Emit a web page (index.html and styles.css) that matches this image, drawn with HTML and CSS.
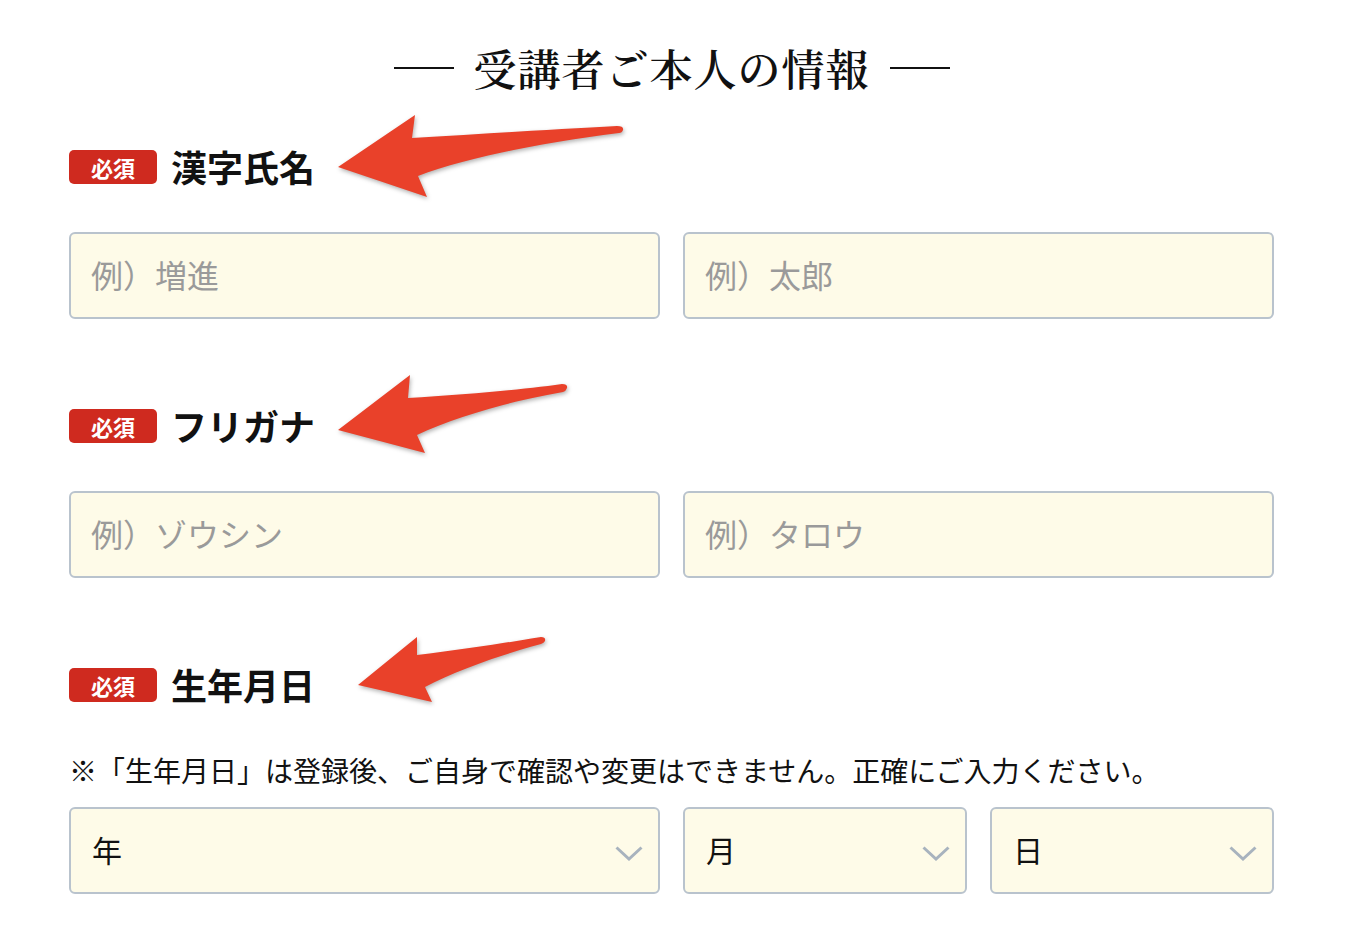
FILE: index.html
```html
<!DOCTYPE html>
<html lang="ja">
<head>
    <meta charset="UTF-8">
    <meta name="viewport" content="width=device-width, initial-scale=1.0">
    <title>受講者ご本人の情報</title>
    <link rel="stylesheet" href="styles.css">
</head>
<body>
    <div class="page">
        <h2 class="section-title">受講者ご本人の情報</h2>

        <div class="field first">
            <div class="field-head">
                <span class="badge">必須</span>
                <span class="label">漢字氏名</span>
            </div>
            <div class="field-body">
                <input type="text" class="span-2" placeholder="例）増進">
                <input type="text" class="span-2" placeholder="例）太郎">
            </div>
        </div>

        <div class="field">
            <div class="field-head">
                <span class="badge">必須</span>
                <span class="label">フリガナ</span>
            </div>
            <div class="field-body">
                <input type="text" class="span-2" placeholder="例）ゾウシン">
                <input type="text" class="span-2" placeholder="例）タロウ">
            </div>
        </div>

        <div class="field">
            <div class="field-head">
                <span class="badge">必須</span>
                <span class="label">生年月日</span>
            </div>
            <p class="note">※「生年月日」は登録後、ご自身で確認や変更はできません。正確にご入力ください。</p>
            <div class="field-body dates">
                <div class="select-wrap span-2">
                    <select><option>年</option></select>
                    <svg class="chevron" viewBox="0 0 28 15"><path d="M1.5 1.5 L14 13 L26.5 1.5"/></svg>
                </div>
                <div class="select-wrap">
                    <select><option>月</option></select>
                    <svg class="chevron" viewBox="0 0 28 15"><path d="M1.5 1.5 L14 13 L26.5 1.5"/></svg>
                </div>
                <div class="select-wrap">
                    <select><option>日</option></select>
                    <svg class="chevron" viewBox="0 0 28 15"><path d="M1.5 1.5 L14 13 L26.5 1.5"/></svg>
                </div>
            </div>
        </div>
    </div>

    <!-- annotation arrows drawn over the form -->
    <svg class="arrows" viewBox="0 0 1362 932">
        <path d="M338,167 L415,115 L412,138 C480,134 560,129 617,126 Q624,126 623,130 Q622,133 619,133 C540,143 465,158 418,176 L427,197 Z"/>
        <path d="M338,430 L410,375 L408,398 C460,395 520,390 562,384 Q568,384 567,388 Q566,391 563,392 C510,401 455,417 417,435 L425,453 Z"/>
        <path d="M358,685 L417,637 L417,655 C460,650 505,643 541,637 Q546,637 545,641 Q544,643 541,644 C500,655 455,671 425,687 L432,702 Z"/>
    </svg>
</body>
</html>
```

FILE: styles.css
```css
:root {
    --red: #cf2a1f;
    --arrow: #e9412a;
    --text: #111;
    --muted: #9a9a9a;
    --field-bg: #fefbe8;
    --border: #b9c3cd;
}

* {
    margin: 0;
    padding: 0;
    box-sizing: border-box;
}

body {
    position: relative;
    font-family: "Noto Sans CJK JP", "Noto Sans", sans-serif;
    color: var(--text);
    background: #fff;
}

.page {
    width: 1274px;
    padding: 38px 0 0 69px;
}

.section-title {
    display: flex;
    align-items: center;
    justify-content: center;
    gap: 20px;
    height: 60px;
    font-family: "Noto Serif CJK JP", "Liberation Serif", "Noto Sans CJK JP", serif;
    font-size: 43px;
    font-weight: 600;
    line-height: 60px;
    letter-spacing: 1px;
}

.section-title::before,
.section-title::after {
    content: "";
    width: 60px;
    height: 2px;
    background: var(--text);
}

.field {
    margin-top: 82px;
}

.field.first {
    margin-top: 44px;
}

.field-head {
    display: flex;
    align-items: center;
    gap: 14px;
    height: 50px;
}

.badge {
    display: flex;
    align-items: center;
    justify-content: center;
    width: 88px;
    height: 34px;
    border-radius: 5px;
    background: var(--red);
    color: #fff;
    font-size: 22px;
    font-weight: 700;
}

.label {
    font-size: 36px;
    font-weight: 700;
    line-height: 50px;
    padding-bottom: 3px;
}

.note {
    margin-top: 40px;
    font-size: 28px;
    line-height: 40px;
}

.field-body {
    display: grid;
    grid-template-columns: repeat(4, 1fr);
    gap: 23px;
    margin-top: 40px;
}

.field-body.dates {
    margin-top: 17px;
}

.span-2 {
    grid-column: span 2;
}

input[type="text"],
select {
    width: 100%;
    height: 87px;
    padding: 0 20px 3px;
    border: 2px solid var(--border);
    border-radius: 6px;
    background: var(--field-bg);
    font-family: "Noto Sans CJK JP", sans-serif;
    font-size: 32px;
    color: var(--text);
    outline: none;
}

input::placeholder {
    color: var(--muted);
}

.select-wrap {
    position: relative;
}

select {
    appearance: none;
    -webkit-appearance: none;
    padding-left: 21px;
    font-size: 30px;
}

.chevron {
    position: absolute;
    right: 17px;
    top: 39px;
    width: 28px;
    height: 15px;
    fill: none;
    stroke: #a8b3be;
    stroke-width: 3;
    pointer-events: none;
}

.arrows {
    position: absolute;
    top: 0;
    left: 0;
    width: 1362px;
    height: 932px;
    pointer-events: none;
}

.arrows path {
    fill: var(--arrow);
    filter: drop-shadow(1px 2px 2px rgba(0, 0, 0, 0.3));
}
```
